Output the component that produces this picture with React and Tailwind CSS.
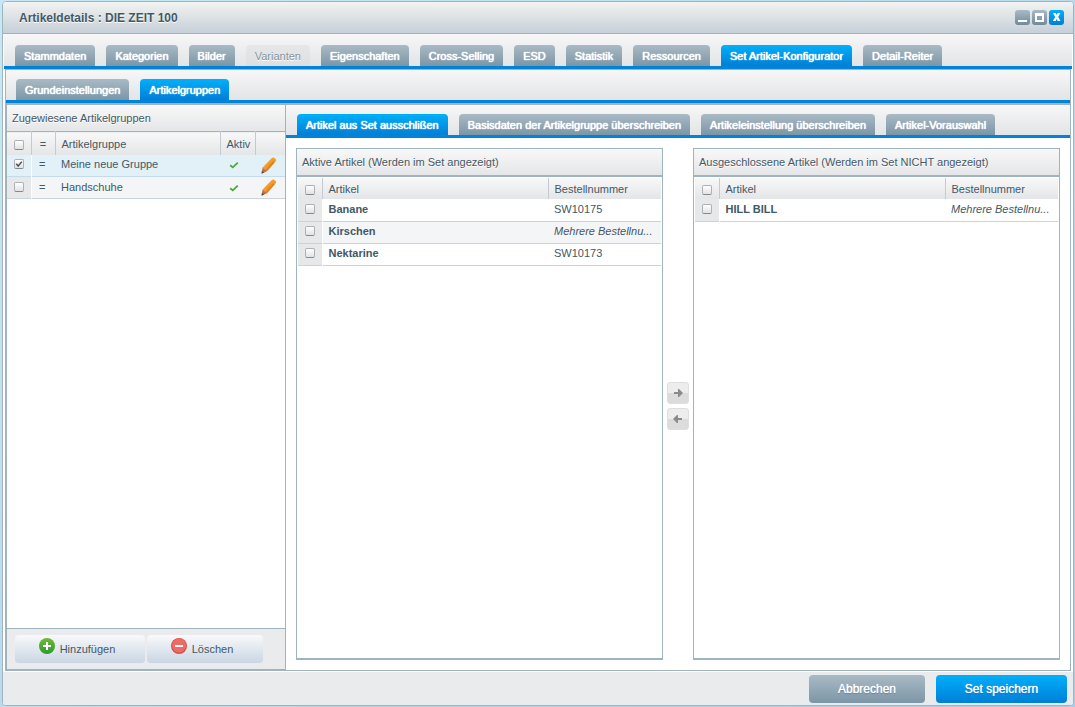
import { useState } from "react";
import clsx from "clsx";

const MAIN_TABS = [
  "Stammdaten",
  "Kategorien",
  "Bilder",
  "Varianten",
  "Eigenschaften",
  "Cross-Selling",
  "ESD",
  "Statistik",
  "Ressourcen",
  "Set Artikel-Konfigurator",
  "Detail-Reiter",
];
const SET_TABS = ["Grundeinstellungen", "Artikelgruppen"];
const GROUP_TABS = [
  "Artikel aus Set ausschlißen",
  "Basisdaten der Artikelgruppe überschreiben",
  "Artikeleinstellung überschreiben",
  "Artikel-Vorauswahl",
];

const GROUPS = [
  { name: "Meine neue Gruppe", selected: true },
  { name: "Handschuhe", selected: false },
];

const ACTIVE_ARTICLES = [
  { name: "Banane", number: "SW10175" },
  { name: "Kirschen", number: "Mehrere Bestellnu...", multiple: true },
  { name: "Nektarine", number: "SW10173" },
];
const EXCLUDED_ARTICLES = [{ name: "HILL BILL", number: "Mehrere Bestellnu...", multiple: true }];

const TabBar = ({ label, tabs, initial, disabled = [], className }) => {
  const [active, setActive] = useState(initial);

  return (
    <div
      role="tablist"
      aria-label={label}
      className={clsx(
        "flex items-end gap-[11px] border-b-[3px] border-[#0083d8] bg-linear-to-b from-[#f7f7f8] to-[#e3e4e6] pr-2",
        className
      )}
    >
      {tabs.map((tab) => {
        const isDisabled = disabled.includes(tab);
        return (
          <button
            key={tab}
            type="button"
            role="tab"
            aria-selected={tab === active}
            disabled={isDisabled}
            onClick={() => setActive(tab)}
            className={clsx(
              "h-[21px] shrink-0 rounded-t-[4px] bg-linear-to-b px-[9px] pt-px whitespace-nowrap",
              isDisabled && "from-[#e6e7e8] to-[#dddfe1] text-[#85949d] text-shadow-[0_1px_0_#fff]",
              !isDisabled && "text-white text-shadow-[0_0_1px_#fff,0_0_1px_#fff]",
              !isDisabled && tab === active && "from-[#00b0fa] to-[#007fd6]",
              !isDisabled && tab !== active && "from-[#a9bac5] to-[#7c96a6]"
            )}
          >
            {tab}
          </button>
        );
      })}
    </div>
  );
};

const CheckBox = ({ label, checked = false }) => (
  <span className="grid place-items-center">
    <input
      type="checkbox"
      aria-label={label}
      defaultChecked={checked}
      className="peer col-start-1 row-start-1 size-[10px] appearance-none rounded-[2px] border border-[#adb1b4] border-b-[#85898c] bg-linear-to-b from-white to-[#e2e2e2]"
    />
    <svg viewBox="0 0 8 8" className="pointer-events-none invisible col-start-1 row-start-1 size-2 peer-checked:visible">
      <path d="M1.2 3.8 3.2 6 6.8 1.6" fill="none" stroke="#4c5459" strokeWidth="1.5" />
    </svg>
  </span>
);

const GreenCheck = () => (
  <svg viewBox="0 0 10 8" className="mx-auto h-2 w-[10px]" role="img" aria-label="Aktiv">
    <path d="M1.2 4.2 3.8 6.4 8.8 1.6" fill="none" stroke="#4aab3a" strokeWidth="1.8" />
  </svg>
);

const Pencil = () => (
  <svg viewBox="0 0 16 17" className="h-[17px] w-4">
    <path d="M10.9 1.1c.7-.8 1.7-.8 2.4-.2l1.3 1.1c.7.6.7 1.6.1 2.3L6 14.2 1.6 10.4z" fill="#f39c2b" />
    <path d="m13.6 5.6-7.6 8.6-1.7-1.4 7.8-8.8z" fill="#df8420" />
    <path d="M1.6 10.4 6 14.2l-4.8 2.2c-.4.2-.6 0-.5-.5z" fill="#b5714d" />
    <path d="m.9 13.7 2.2 1.8-2 .9c-.4.1-.6 0-.5-.5z" fill="#74453a" />
  </svg>
);

const HeadCell = ({ children, className }) => (
  <th
    className={clsx(
      "border-l border-[#c3cad0] bg-linear-to-b from-[#f8f8f8] to-[#e4e5e7] pr-0 pb-0 font-normal first:border-l-0",
      className
    )}
  >
    {children}
  </th>
);

const PanelTitle = ({ children, className }) => (
  <h2 className={clsx("h-[26px] truncate bg-linear-to-b from-[#f8f8f8] to-[#e5e6e8] px-[5px] leading-[26px] text-shadow-[0_1px_0_#fff]", className)}>
    {children}
  </h2>
);

const GroupPanel = () => (
  <section className="flex w-[281px] shrink-0 flex-col border-r border-b-2 border-l-2 border-[#a0b4c0] bg-white">
    <PanelTitle>Zugewiesene Artikelgruppen</PanelTitle>
    <table className="w-full table-fixed border-t border-[#a0b4c0]">
      <thead>
        <tr className="h-[23px]">
          <HeadCell className="w-6 pt-1 pl-0"><CheckBox label="Alle Gruppen auswählen" /></HeadCell>
          <HeadCell className="w-6 pt-[2px] pl-0 text-center">=</HeadCell>
          <HeadCell className="pt-[2px] pl-[6px] text-left">Artikelgruppe</HeadCell>
          <HeadCell className="w-[35px] pt-[2px] pl-[6px] text-left">Aktiv</HeadCell>
          <HeadCell className="w-[30px]" />
        </tr>
      </thead>
      <tbody>
        {GROUPS.map((group) => (
          <tr
            key={group.name}
            className={clsx("h-[22px] border-b", group.selected ? "border-[#c4dbeb] bg-[#e2f1f8]" : "border-[#cbd3d9] bg-[#f3f5f7]")}
          >
            <td className={clsx("border-r border-white p-0 pb-[2px]", !group.selected && "bg-[#e6e8ea]")}>
              <CheckBox label={group.name} checked={group.selected} />
            </td>
            <td className="p-0 pr-[2px] pb-[2px] text-center">=</td>
            <td className="p-0 pb-[2px] pl-[6px]">{group.name}</td>
            <td className="p-0 pr-2"><GreenCheck /></td>
            <td className="p-0">
              <button type="button" aria-label={`${group.name} bearbeiten`} className="flex pl-[6px]">
                <Pencil />
              </button>
            </td>
          </tr>
        ))}
      </tbody>
    </table>
    <div className="mt-auto flex h-[41px] items-start gap-[2px] border-t border-[#a0b4c0] bg-[#eaebed] px-2 pt-[6px]">
      <button type="button" className="flex h-7 w-[130px] items-center justify-center gap-[5px] rounded-[4px] bg-linear-to-b from-[#f8f9fb] to-[#cad6e3] pr-[6px]">
        <svg viewBox="0 0 16 16" className="mb-[6px] size-4">
          <defs>
            <linearGradient id="add" x1="0" y1="0" x2="0" y2="1">
              <stop stopColor="#72b83b" />
              <stop offset="1" stopColor="#2b9a2f" />
            </linearGradient>
          </defs>
          <circle cx="8" cy="8" r="8" fill="url(#add)" />
          <path d="M8 4v8M4 8h8" stroke="#fff" strokeWidth="2" />
        </svg>
        Hinzufügen
      </button>
      <button type="button" className="flex h-7 w-[116px] items-center justify-center gap-[5px] rounded-[4px] bg-linear-to-b from-[#f8f9fb] to-[#cad6e3] pr-[6px]">
        <svg viewBox="0 0 16 16" className="mb-[6px] size-4">
          <circle cx="8" cy="8" r="8" fill="#d94f49" />
          <circle cx="8" cy="7.5" r="7" fill="#ef6a64" />
          <path d="M4 8h8" stroke="#fff" strokeWidth="2" />
        </svg>
        Löschen
      </button>
    </div>
  </section>
);

const ArticleGrid = ({ title, rows }) => (
  <section className="min-w-0 flex-1 border border-b-2 border-[#a0b4c0] bg-white">
    <PanelTitle className="box-content border-b-2 border-[#a0b4c0]">{title}</PanelTitle>
    <div className="px-px pt-px">
      <table className="w-full table-fixed">
        <thead>
          <tr className="h-[21px]">
            <HeadCell className="w-6 pt-[2px] pl-0"><CheckBox label={`${title}: alle auswählen`} /></HeadCell>
            <HeadCell className="pt-px pl-[6px] text-left">Artikel</HeadCell>
            <HeadCell className="w-[113px] pt-px pl-[6px] text-left">Bestellnummer</HeadCell>
          </tr>
        </thead>
        <tbody>
          {rows.map((row) => (
            <tr key={row.name} className="h-[22px] border-b border-[#cbd3d9] even:bg-[#f3f5f7]">
              <td className="border-r border-white bg-[#e6e8ea] p-0 pb-[2px]">
                <CheckBox label={row.name} />
              </td>
              <td className="truncate p-0 pb-[2px] pl-[6px] font-bold">{row.name}</td>
              <td className={clsx("truncate p-0 pb-[2px] pl-[6px]", row.multiple && "italic")}>{row.number}</td>
            </tr>
          ))}
        </tbody>
      </table>
    </div>
  </section>
);

const MoveButton = ({ label, d }) => (
  <button
    type="button"
    aria-label={label}
    className="flex size-[22px] items-center justify-center rounded-[3px] border border-[#dedede] bg-linear-to-b from-[#ededed] from-50% to-[#dcdcdc] to-50%"
  >
    <svg viewBox="0 0 10 10" className="size-[10px]">
      <path d={d} fill="#8a8a8a" />
    </svg>
  </button>
);

const TitleBar = () => (
  <header className="flex h-8 items-center justify-between border-b border-[#a0b4c0] bg-linear-to-b from-[#f3f3f1] to-[#c6d0d8] pr-[9px] pl-4">
    <h1 className="text-[12px] font-bold text-shadow-[0_1px_0_#fff]">Artikeldetails : DIE ZEIT 100</h1>
    <div className="flex gap-[2px]">
      <button type="button" aria-label="Minimieren" className="rounded-[3px] bg-linear-to-b from-[#a9bac5] to-[#6f8a9b]">
        <svg viewBox="0 0 15 15" className="size-[15px]"><path d="M3 10h9v2H3z" fill="#fff" /></svg>
      </button>
      <button type="button" aria-label="Maximieren" className="rounded-[3px] bg-linear-to-b from-[#a9bac5] to-[#6f8a9b]">
        <svg viewBox="0 0 15 15" className="size-[15px]"><path d="M3 3h9v9H3zM5 6v4h5V6z" fill="#fff" fillRule="evenodd" /></svg>
      </button>
      <button type="button" aria-label="Schließen" className="rounded-[3px] bg-linear-to-b from-[#00b0fa] to-[#007fd6]">
        <svg viewBox="0 0 15 15" className="size-[15px]"><path d="M4 3h2.8l.9 1.9L8.6 3h2.8L9.2 7l2.3 4H8.7l-1-2-1 2H3.8l2.4-4z" fill="#fff" /></svg>
      </button>
    </div>
  </header>
);

const App = () => (
  <div className="flex min-h-screen flex-col bg-linear-to-br from-[#c6eaf5] to-[#aecbe6] pt-px pr-px pb-px pl-[2px] font-['Liberation_Sans',Arial,sans-serif] text-[11px] leading-[14px] text-[#435865]">
    <div className="flex flex-1 flex-col overflow-hidden rounded-[4px] border border-[#a0b4c0] bg-white">
      <TitleBar />
      <TabBar
        label="Artikeldetails"
        tabs={MAIN_TABS}
        initial="Set Artikel-Konfigurator"
        disabled={["Varianten"]}
        className="mx-px h-[35px] pl-[11px]"
      />

      <main className="mx-[2px] flex flex-1 flex-col border-x border-t border-[#a0b4c0]">
        <TabBar label="Set-Konfigurator" tabs={SET_TABS} initial="Artikelgruppen" className="h-[33px] pl-[10px]" />
        <div className="-ml-px flex flex-1 border-t-2 border-[#a0b4c0]">
          <GroupPanel />
          <div className="flex min-w-0 flex-1 flex-col border-b border-[#a0b4c0]">
            <TabBar label="Artikelgruppe" tabs={GROUP_TABS} initial="Artikel aus Set ausschlißen" className="h-[33px] pl-[11px]" />
            <div className="flex flex-1 p-[10px]">
              <ArticleGrid title="Aktive Artikel (Werden im Set angezeigt)" rows={ACTIVE_ARTICLES} />
              <div className="flex w-[30px] flex-col items-center justify-center gap-1 pt-[3px]">
                <MoveButton label="Ausschließen" d="M1 4h4V1h1l4 4-4 4H5V6H1z" />
                <MoveButton label="Aktivieren" d="M9 4H5V1H4L0 5l4 4h1V6h4z" />
              </div>
              <ArticleGrid title="Ausgeschlossene Artikel (Werden im Set NICHT angezeigt)" rows={EXCLUDED_ARTICLES} />
            </div>
          </div>
        </div>
      </main>

      <footer className="mt-px flex h-[33px] shrink-0 items-start justify-end gap-[11px] bg-[#eaebed] pt-[3px] pr-[6px] text-[12px] text-white">
        <button type="button" className="h-7 w-[116px] rounded-[4px] bg-linear-to-b from-[#a9bac5] to-[#7c96a6] text-shadow-[0_0_1px_#fff,0_1px_1px_#5a7281]">
          Abbrechen
        </button>
        <button type="button" className="h-7 w-[131px] rounded-[4px] bg-linear-to-b from-[#00b0fa] to-[#007fd6] text-shadow-[0_0_1px_#fff,0_1px_1px_#0064b0]">
          Set speichern
        </button>
      </footer>
    </div>
  </div>
);

export default App;
